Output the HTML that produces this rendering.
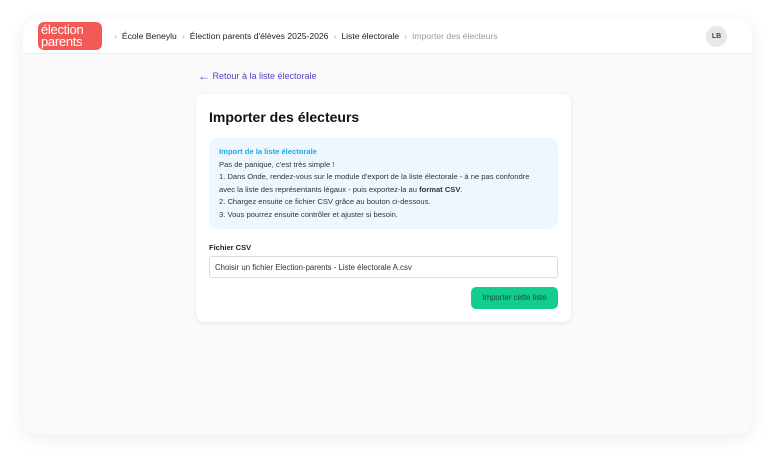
<!DOCTYPE html>
<html><head><meta charset="utf-8"><style>
*{box-sizing:border-box;margin:0;padding:0}
body{width:775px;height:462px;background:#fff;font-family:"Liberation Sans",sans-serif;position:relative;overflow:hidden}
.win{position:absolute;left:23px;top:19px;width:729px;height:415px;background:#fafafa;border-radius:14px;box-shadow:0 4px 18px rgba(0,0,0,.08);overflow:hidden}
.hdr{height:35px;background:#fff;border-bottom:1px solid #ececec;position:relative}
.logo{position:absolute;left:15px;top:3px;width:64px;height:28px;background:#f25a55;border-radius:6px;color:#fff;font-size:13px;line-height:11.5px;padding:2px 0 0 3px;letter-spacing:-.3px}
.crumb{position:absolute;left:86px;top:12px;font-size:8.6px;color:#222;white-space:nowrap}
.crumb span.s{color:#aaa;margin:0 5px}
.crumb .last{color:#999}
.av{position:absolute;right:25px;top:7px;width:21px;height:21px;border-radius:50%;background:#e8e8e8;font-size:7px;font-weight:bold;color:#444;text-align:center;line-height:21px}
.back{position:absolute;left:175px;top:50px;font-size:9px;color:#5b3fc4}
.back b{font-size:12px;font-weight:normal;vertical-align:-1px}
.card{position:absolute;left:173px;top:75px;width:375px;height:228px;background:#fff;border-radius:8px;box-shadow:0 1px 4px rgba(0,0,0,.08)}
h1{position:absolute;left:13px;top:15px;font-size:14px;font-weight:bold;color:#111}
.info{position:absolute;left:13px;top:44px;width:349px;height:91px;background:#eef7fe;border-radius:9px;padding:8px 10px;font-size:7.6px;color:#333;line-height:12.5px}
.info b.t{color:#1fa9e8;display:block}
.lbl{position:absolute;left:13px;top:149px;font-size:7.5px;font-weight:bold;color:#222}
.inp{position:absolute;left:13px;top:162px;width:349px;height:22px;border:1px solid #ddd;border-radius:3px;font-size:7.8px;color:#333;padding:6px 5px}
.btn{position:absolute;left:275px;top:193px;width:87px;height:22px;background:#14cd8c;border-radius:5px;font-size:7.8px;color:#1f4a3a;text-align:center;line-height:22px}
</style></head><body>
<div class="win">
<div class="hdr">
<div class="logo">élection<br>parents</div>
<div class="crumb"><span class="s">›</span>École Beneylu<span class="s">›</span>Élection parents d'élèves 2025-2026<span class="s">›</span>Liste électorale<span class="s">›</span><span class="last">Importer des électeurs</span></div>
<div class="av">LB</div>
</div>
<div class="back"><b>←</b> Retour à la liste électorale</div>
<div class="card">
<h1>Importer des électeurs</h1>
<div class="info"><b class="t">Import de la liste électorale</b>Pas de panique, c'est très simple !<br>1. Dans Onde, rendez-vous sur le module d'export de la liste électorale - à ne pas confondre<br>avec la liste des représentants légaux - puis exportez-la au <b>format CSV</b>.<br>2. Chargez ensuite ce fichier CSV grâce au bouton ci-dessous.<br>3. Vous pourrez ensuite contrôler et ajuster si besoin.</div>
<div class="lbl">Fichier CSV</div>
<div class="inp">Choisir un fichier Election-parents - Liste électorale A.csv</div>
<div class="btn">Importer cette liste</div>
</div>
</div>
</body></html>
